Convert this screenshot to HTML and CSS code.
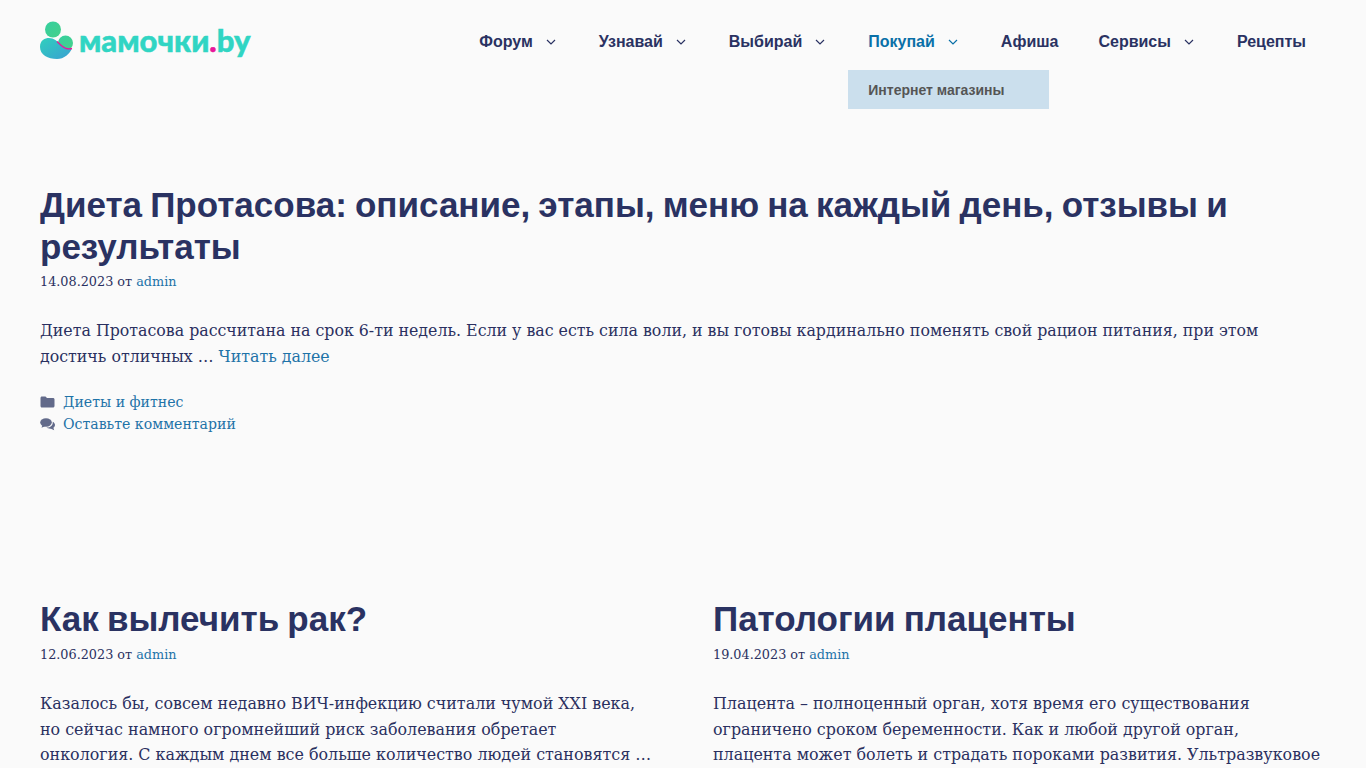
FILE: index.html
```html
<!DOCTYPE html>
<html lang="ru">
<head>
<meta charset="utf-8">
<title>мамочки.by</title>
<link rel="stylesheet" href="styles.css">
</head>
<body>
<header class="site-header">
  <a class="logo" href="#">
    <svg class="logo-mark" width="34" height="38" viewBox="0 0 34 38">
      <defs>
        <linearGradient id="g1" x1="0" y1="0" x2="1" y2="1"><stop offset="0" stop-color="#35cf9f"/><stop offset="1" stop-color="#45d08a"/></linearGradient>
        <linearGradient id="g2" x1="0" y1="0" x2="1" y2="1"><stop offset="0" stop-color="#2fd0bd"/><stop offset="1" stop-color="#3a9fd2"/></linearGradient>
      </defs>
      <circle cx="13" cy="8.500" r="8" fill="url(#g1)"/>
      <circle cx="25.500" cy="22" r="7.500" fill="url(#g1)"/>
      <path d="M0 26c0-7 5-9 9-9 5 0 8 3 12 7 3 2.500 7 3.500 11 3-2 6-8 11-15 11-9 0-17-4-17-12z" fill="url(#g2)"/>
      <path d="M17 20.500c3 3 6 6 9 7 2 .5 4 .5 6 0" fill="none" stroke="#e8189a" stroke-width="1.300"/>
    </svg>
    <span class="logo-text">мамочки<span class="logo-dot">.</span>by</span>
  </a>
  <nav class="main-nav">
    <a class="nav-item" href="#">Форум<svg class="caret" width="10" height="6" viewBox="0 0 10 6"><path d="M1 1l4 4 4-4" fill="none" stroke="currentColor" stroke-width="1.200"/></svg></a>
    <a class="nav-item" href="#">Узнавай<svg class="caret" width="10" height="6" viewBox="0 0 10 6"><path d="M1 1l4 4 4-4" fill="none" stroke="currentColor" stroke-width="1.200"/></svg></a>
    <a class="nav-item" href="#">Выбирай<svg class="caret" width="10" height="6" viewBox="0 0 10 6"><path d="M1 1l4 4 4-4" fill="none" stroke="currentColor" stroke-width="1.200"/></svg></a>
    <div class="nav-wrap">
      <a class="nav-item is-active" href="#">Покупай<svg class="caret" width="10" height="6" viewBox="0 0 10 6"><path d="M1 1l4 4 4-4" fill="none" stroke="currentColor" stroke-width="1.200"/></svg></a>
      <div class="dropdown"><a href="#">Интернет магазины</a></div>
    </div>
    <a class="nav-item" href="#">Афиша</a>
    <a class="nav-item" href="#">Сервисы<svg class="caret" width="10" height="6" viewBox="0 0 10 6"><path d="M1 1l4 4 4-4" fill="none" stroke="currentColor" stroke-width="1.200"/></svg></a>
    <a class="nav-item" href="#">Рецепты</a>
  </nav>
</header>
<main class="content">
  <article class="post post-lead">
    <h2 class="post-title">Диета Протасова: описание, этапы, меню на каждый день, отзывы и результаты</h2>
    <p class="post-meta">14.08.2023 от <a href="#">admin</a></p>
    <p class="post-text">Диета Протасова рассчитана на срок 6-ти недель. Если у вас есть сила воли, и вы готовы кардинально поменять свой рацион питания, при этом<br>достичь отличных … <a href="#">Читать далее</a></p>
    <div class="post-links">
      <div class="post-link">
        <svg class="ico" width="15" height="12" viewBox="0 0 14 12"><path d="M0 2c0-.8.6-1.500 1.400-1.500h3.600l1.500 1.500h6c.8 0 1.500.6 1.500 1.400v6.600c0 .8-.7 1.500-1.500 1.500H1.400C.6 11.500 0 10.800 0 10z" fill="#626a8a"/></svg>
        <a href="#">Диеты и фитнес</a>
      </div>
      <div class="post-link">
        <svg class="ico" width="15" height="13" viewBox="0 0 15 13"><ellipse cx="6" cy="4.500" rx="5.800" ry="4.200" fill="#626a8a"/><path d="M2.500 7l-1 2.800 3.500-1.500z" fill="#626a8a"/><path d="M12.700 3.800c1.400.7 2.300 1.900 2.300 3.200 0 1.100-.6 2.100-1.600 2.800l.8 2.400-3.200-1.500c-1.700.2-3.400-.2-4.500-1.100 3.400.2 6.800-1.900 6.200-5.800z" fill="#626a8a"/></svg>
        <a href="#">Оставьте комментарий</a>
      </div>
    </div>
  </article>
  <div class="post-grid">
    <article class="post">
      <h2 class="post-title">Как вылечить рак?</h2>
      <p class="post-meta">12.06.2023 от <a href="#">admin</a></p>
      <p class="post-text">Казалось бы, совсем недавно ВИЧ-инфекцию считали чумой XXI века,<br>но сейчас намного огромнейший риск заболевания обретает<br>онкология. С каждым днем все больше количество людей становятся …</p>
    </article>
    <article class="post">
      <h2 class="post-title">Патологии плаценты</h2>
      <p class="post-meta">19.04.2023 от <a href="#">admin</a></p>
      <p class="post-text">Плацента – полноценный орган, хотя время его существования<br>ограничено сроком беременности. Как и любой другой орган,<br>плацента может болеть и страдать пороками развития. Ультразвуковое</p>
    </article>
  </div>
</main>
</body>
</html>
```
FILE: styles.css
```css
* { box-sizing: border-box; }
html, body { margin: 0; height: 768px; overflow: hidden; }
body {
  background: #fafafa;
  color: #2a3060;
  font-family: "DejaVu Serif", serif;
  font-size: 15.8px;
  line-height: 25.5px;
}
a { color: #1e73a8; text-decoration: none; }

.site-header {
  display: flex;
  justify-content: space-between;
  align-items: flex-start;
  padding: 0 40px;
  height: 70px;
}
.logo { display: flex; align-items: center; gap: 5px; height: 40px; margin-top: 20px; }
.logo-mark { display: block; }
.logo-text {
  font-family: Lato, sans-serif;
  font-weight: 900;
  font-size: 31px;
  line-height: 40px;
  color: #30d5c3;
  -webkit-text-stroke: 0.5px #30d5c3;
}
.logo-dot { color: #e8189a; -webkit-text-stroke-color: #e8189a; }

.main-nav { display: flex; padding-top: 13px; font-family: "Liberation Sans", sans-serif; }
.nav-wrap { position: relative; }
.nav-item {
  display: flex;
  align-items: center;
  height: 57px;
  padding: 0 20px;
  font-size: 16px;
  font-weight: 700;
  color: #2a3262;
}
.nav-item.is-active { color: #0a70a8; }
.caret { margin-left: 13px; margin-right: 3px; }
.dropdown {
  position: absolute;
  top: 57px;
  left: 0;
  width: 201px;
  height: 39px;
  background: #cbdfed;
  display: flex;
  align-items: center;
  padding-left: 20px;
  padding-top: 3px;
  font-size: 14px;
  font-weight: 700;
}
.dropdown a { color: #555; }

.content { padding: 0 40px; }
.post-lead { padding-top: 114px; height: 528px; }
.post-title {
  margin: 0;
  font-family: "Liberation Sans", sans-serif;
  font-size: 35px;
  word-spacing: -1.6px;
  line-height: 42px;
  font-weight: 700;
  color: #2a3262;
}
.post-meta { margin: 1px 0 0; font-size: 12.8px; line-height: 26px; }
.post-grid .post-meta { margin-top: 2px; }
.post-text { margin: 23px 0 0; white-space: nowrap; }
.post-grid .post-text { font-size: 15.9px; }
.post-links { margin-top: 22px; font-size: 14.1px; line-height: 22px; }
.post-link { display: flex; align-items: center; }
.ico { margin-right: 8px; }
.post-grid { display: grid; grid-template-columns: 1fr 1fr; gap: 60px; }
```
